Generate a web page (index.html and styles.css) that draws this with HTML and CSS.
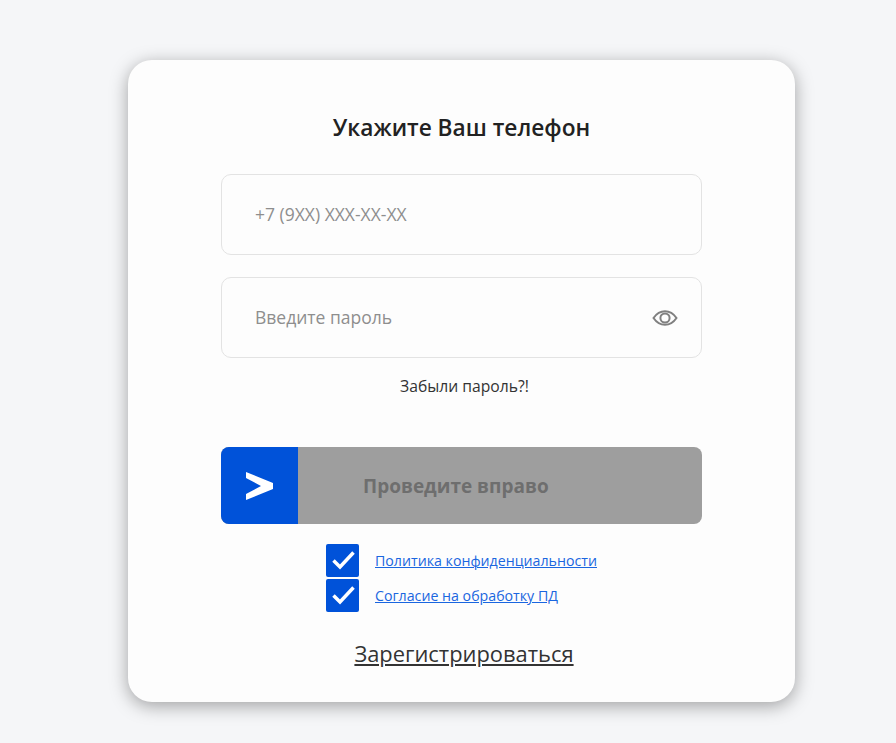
FILE: index.html
```html
<!DOCTYPE html>
<html lang="ru">
<head>
  <meta charset="UTF-8">
  <title>Вход</title>
  <link rel="stylesheet" href="styles.css">
</head>
<body>
  <main class="card">
    <h1 class="title">Укажите Ваш телефон</h1>
    <div class="field">
      <span class="placeholder">+7 (9XX) XXX-XX-XX</span>
    </div>
    <div class="field">
      <span class="placeholder">Введите пароль</span>
      <svg class="eye" width="26" height="18" viewBox="0 0 26 18" fill="none" stroke="#808080" stroke-width="2">
        <path d="M1.500 9C4.500 4.600 8.500 2.200 13 2.200S21.500 4.600 24.500 9C21.500 13.400 17.500 15.800 13 15.800S4.500 13.400 1.500 9Z"/>
        <circle cx="13" cy="9" r="4.600"/>
      </svg>
    </div>
    <a class="forgot">Забыли пароль?!</a>
    <div class="slider">
      <div class="slider-handle">
        <svg width="27" height="28" viewBox="0 0 27 28" fill="#fff">
          <path d="M0 0L27 11V17L0 28V22L15 14L0 6Z"/>
        </svg>
      </div>
      <span class="slider-text">Проведите вправо</span>
    </div>
    <div class="agreements">
      <div class="agreement">
        <span class="checkbox">
          <svg class="check" width="23" height="19" viewBox="0 0 23 19" fill="none" stroke="#fff" stroke-width="3.500"><path d="M1.500 9.500L8 16L21.500 1.500"/></svg>
        </span>
        <a class="agreement-link">Политика конфиденциальности</a>
      </div>
      <div class="agreement">
        <span class="checkbox">
          <svg class="check" width="23" height="19" viewBox="0 0 23 19" fill="none" stroke="#fff" stroke-width="3.500"><path d="M1.500 9.500L8 16L21.500 1.500"/></svg>
        </span>
        <a class="agreement-link">Согласие на обработку ПД</a>
      </div>
    </div>
    <a class="register">Зарегистрироваться</a>
  </main>
</body>
</html>
```

FILE: styles.css
```css
* {
  margin: 0;
  padding: 0;
  box-sizing: border-box;
  font-family: 'Open Sans', sans-serif;
}

body {
  background-color: #f5f6f8;
  height: 743px;
  overflow: hidden;
  padding: 60px 0 0 128px;
}

.card {
  width: 667px;
  height: 642px;
  background-color: #fdfdfd;
  border-radius: 24px;
  box-shadow: 0 4px 18px rgba(0, 0, 0, 0.35);
  padding: 53px 93px 0 93px;
  display: flex;
  flex-direction: column;
  align-items: center;
}

.title {
  font-size: 22.700px;
  font-weight: 600;
  line-height: 30px;
  color: #222;
  margin-bottom: 31px;
}

.field {
  width: 100%;
  height: 81px;
  flex-shrink: 0;
  border: 1px solid #e3e3e3;
  border-radius: 10px;
  padding: 0 23px 0 33px;
  margin-bottom: 22px;
  display: flex;
  align-items: center;
  justify-content: space-between;
}

.placeholder {
  font-size: 17.500px;
  color: #8e8e8e;
  margin-bottom: 2px;
}

.forgot {
  font-size: 15.700px;
  line-height: 20px;
  color: #333;
  margin-top: -4px;
  margin-bottom: 51px;
  margin-left: 6px;
}

.slider {
  width: 100%;
  height: 77px;
  flex-shrink: 0;
  background-color: #9e9e9e;
  border-radius: 8px;
  overflow: hidden;
  display: flex;
  align-items: center;
}

.slider-handle {
  width: 76.500px;
  height: 100%;
  background-color: #0052d9;
  display: flex;
  align-items: center;
  justify-content: center;
}

.slider-text {
  font-size: 19px;
  font-weight: 700;
  color: #6e6e6e;
  margin-left: 65.500px;
}

.agreements {
  display: flex;
  flex-direction: column;
  gap: 2px;
  margin-top: 20px;
  align-self: flex-start;
  margin-left: 105px;
}

.agreement {
  display: flex;
  align-items: center;
  gap: 16px;
}

.checkbox {
  width: 33px;
  height: 33px;
  background-color: #0052d9;
  border-radius: 2px;
  display: flex;
  align-items: center;
  justify-content: center;
}

.check {
  margin-left: 2px;
}

.agreement-link {
  font-size: 14.200px;
  color: #1a66e0;
  text-decoration: underline;
}

.register {
  font-size: 21.900px;
  line-height: 30px;
  color: #333;
  text-decoration: underline;
  margin-top: 27px;
  margin-left: 5px;
}
```
